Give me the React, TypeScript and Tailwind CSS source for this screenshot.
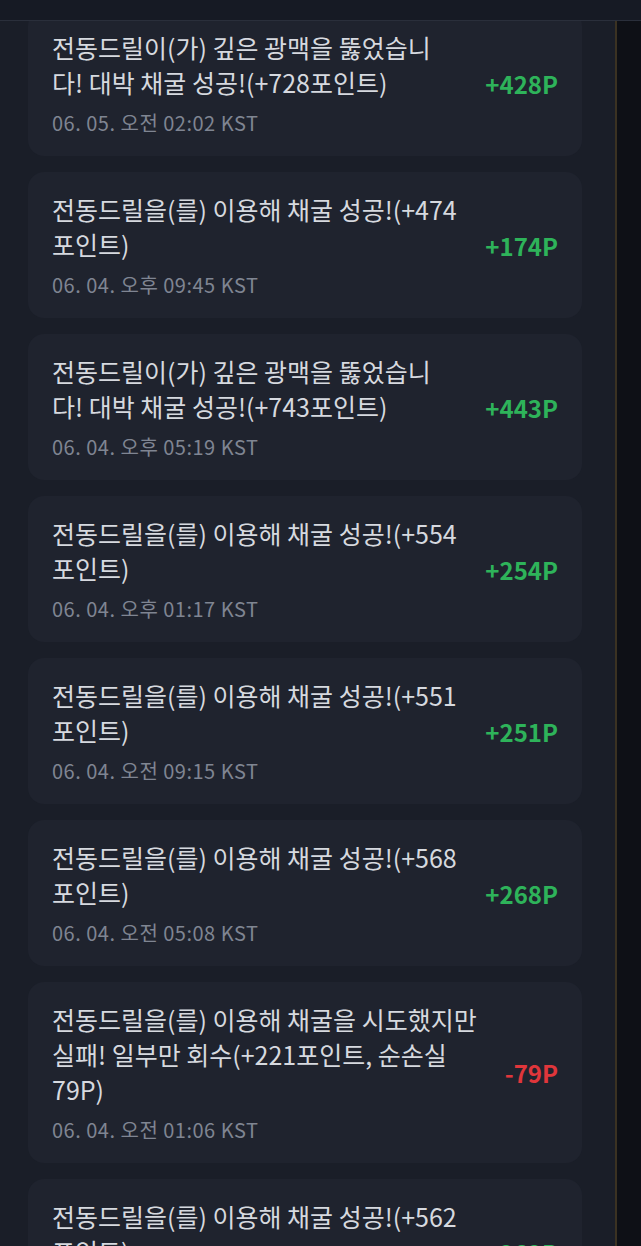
import React from 'react';

const logs = [
  { text: '전동드릴이(가) 깊은 광맥을 뚫었습니다! 대박 채굴 성공!(+728포인트)', date: '06. 05. 오전 02:02 KST', amount: '+428P', up: true },
  { text: '전동드릴을(를) 이용해 채굴 성공!(+474포인트)', date: '06. 04. 오후 09:45 KST', amount: '+174P', up: true },
  { text: '전동드릴이(가) 깊은 광맥을 뚫었습니다! 대박 채굴 성공!(+743포인트)', date: '06. 04. 오후 05:19 KST', amount: '+443P', up: true },
  { text: '전동드릴을(를) 이용해 채굴 성공!(+554포인트)', date: '06. 04. 오후 01:17 KST', amount: '+254P', up: true },
  { text: '전동드릴을(를) 이용해 채굴 성공!(+551포인트)', date: '06. 04. 오전 09:15 KST', amount: '+251P', up: true },
  { text: '전동드릴을(를) 이용해 채굴 성공!(+568포인트)', date: '06. 04. 오전 05:08 KST', amount: '+268P', up: true },
  { text: '전동드릴을(를) 이용해 채굴을 시도했지만 실패! 일부만 회수(+221포인트, 순손실 79P)', date: '06. 04. 오전 01:06 KST', amount: '-79P', up: false },
  { text: '전동드릴을(를) 이용해 채굴 성공!(+562포인트)', date: '06. 04. 오전 01:00 KST', amount: '+262P', up: true },
];

export default function App() {
  return (
    <div
      className="h-[1246px] w-[641px] overflow-hidden bg-[#0e1016] flex flex-col"
      style={{ fontFamily: '"Noto Sans CJK KR", "Noto Sans", sans-serif' }}
    >
      {/* Top bar */}
      <div className="h-[21px] shrink-0 bg-[#161a24] border-b border-[#2a2f3b] relative z-10" />

      <div className="flex flex-1 min-h-0">
        {/* Feed, scrolled so the first card sits under the bar */}
        <div className="w-[617px] shrink-0 bg-[#1a1e28] border-r-2 border-[#3b3222] overflow-hidden">
          <div className="-mt-[11px] pl-7 pr-[33px] flex flex-col gap-4">
            {logs.map((log, i) => (
              <div key={i} className="bg-[#1f232e] rounded-2xl pl-6 pr-6 pt-5 pb-[19px] flex items-center gap-6">
                <div className="flex-1 min-w-0">
                  <p className="text-[25px] leading-[35px] text-[#d6d9df]">{log.text}</p>
                  <p className="text-[20px] leading-[28px] tracking-[0.5px] mt-[9px] text-[#7f8592]">{log.date}</p>
                </div>
                <div
                  className={`shrink-0 text-[24px] font-bold ${log.up ? 'text-[#2eb35a]' : 'text-[#e0363b]'}`}
                >
                  {log.amount}
                </div>
              </div>
            ))}
          </div>
        </div>
        {/* Right strip */}
        <div className="flex-1 bg-[#0e1016]" />
      </div>
    </div>
  );
}
